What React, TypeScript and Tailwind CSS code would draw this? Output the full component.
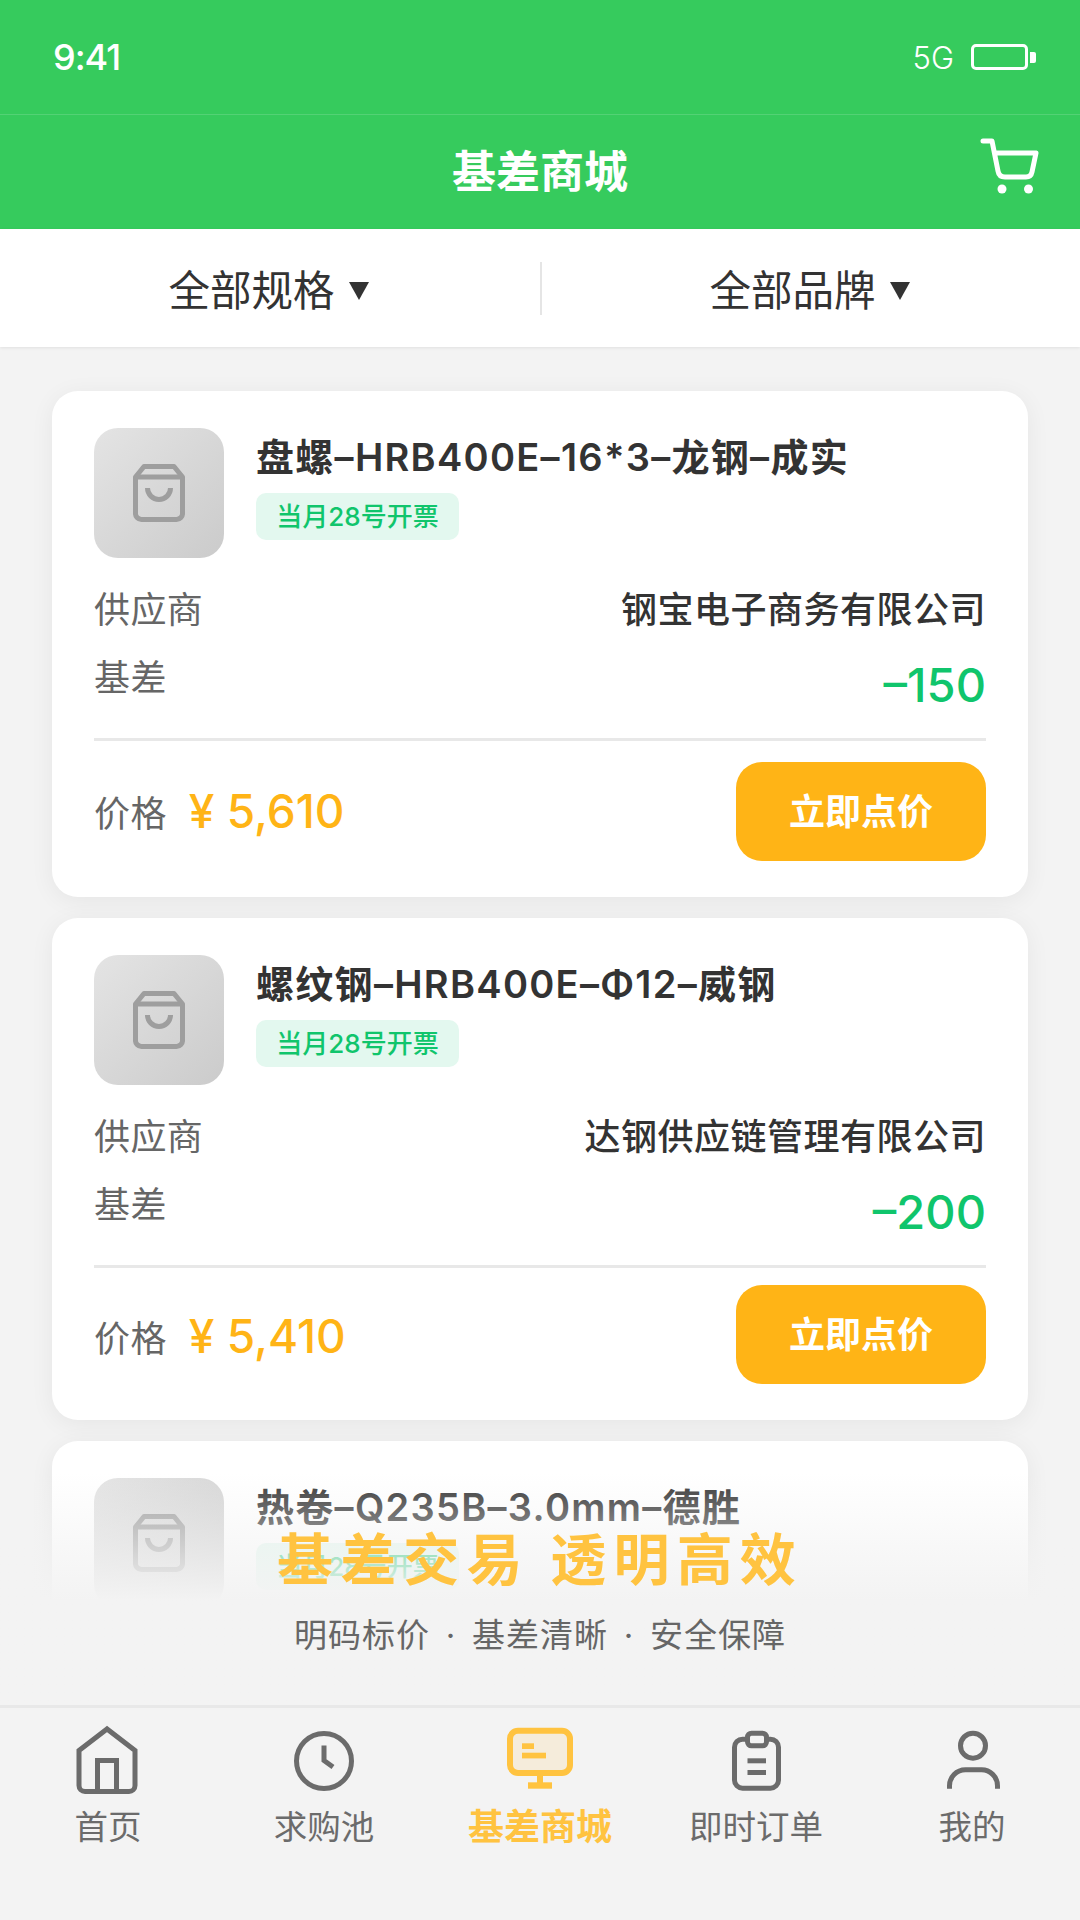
import React from 'react';

type Product = {
  title: string;
  supplier?: string;
  basis?: string;
  price?: string;
  footTop?: string;
  priceTop?: string;
};

const PRODUCTS: Product[] = [
  { title: '盘螺–HRB400E–16*3–龙钢–成实', supplier: '钢宝电子商务有限公司', basis: '–150', price: '5,610', footTop: 'mt-[21px]', priceTop: 'mt-0' },
  { title: '螺纹钢–HRB400E–Φ12–威钢', supplier: '达钢供应链管理有限公司', basis: '–200', price: '5,410', footTop: 'mt-[17px]', priceTop: 'mt-[4px]' },
  { title: '热卷–Q235B–3.0mm–德胜' },
];

const BagIcon = () => (
  <svg width="52" height="58" viewBox="0 0 52 58" fill="none" stroke="#9e9e9e" strokeWidth="5">
    <path d="M2.5 13 L11 2.5 H41 L49.5 13 V49 a6 6 0 0 1 -6 6.5 H8.5 a6 6 0 0 1 -6 -6.5 Z" strokeLinejoin="round" />
    <path d="M2.5 13 H49.5" />
    <path d="M14.5 24 a11.5 11.5 0 0 0 23 0" />
  </svg>
);

const ProductCard: React.FC<{ item: Product }> = ({ item }) => (
  <div className="bg-white rounded-[26px] px-[42px] pt-[37px] pb-9 shadow-[0_4px_24px_rgba(0,0,0,0.06)]">
    <div className="flex gap-[32px]">
      <div className="w-[130px] h-[130px] rounded-[24px] bg-gradient-to-br from-[#e4e4e4] to-[#cbcbcb] flex items-center justify-center shrink-0">
        <BagIcon />
      </div>
      <div>
        <h2 className="text-[38px] leading-[50px] font-semibold tracking-[1.3px] text-[#333333] whitespace-nowrap mt-[4px]">{item.title}</h2>
        <span className="mt-[11px] inline-flex items-center justify-center w-[203px] h-[47px] rounded-[10px] bg-[#e3f8ef] text-[#10c56c] text-[26px] font-medium">
          当月28号开票
        </span>
      </div>
    </div>
    {item.supplier && (
      <>
        <div className="mt-[30px] flex justify-between items-center h-[44px]">
          <span className="text-[36px] tracking-[0.4px] text-[#666666]">供应商</span>
          <span className="text-[36px] tracking-[0.5px] font-medium text-[#333333]">{item.supplier}</span>
        </div>
        <div className="mt-[24px] flex justify-between items-start h-[85px] border-b-[3px] border-[#e8e8e8]">
          <span className="text-[36px] leading-[44px] tracking-[0.4px] text-[#666666]">基差</span>
          <span className="text-[47px] leading-[58px] font-medium text-[#10c56c]">{item.basis}</span>
        </div>
        <div className={`${item.footTop} flex justify-between items-center`}>
          <div className={`${item.priceTop} flex items-center gap-[22px]`}>
            <span className="text-[36px] tracking-[0.4px] text-[#666666] mt-[4px]">价格</span>
            <span className="text-[46px] font-medium text-[#ffb416]">¥ {item.price}</span>
          </div>
          <button className="w-[250px] h-[99px] rounded-[26px] bg-[#ffb416] text-white text-[36px] font-semibold">
            立即点价
          </button>
        </div>
      </>
    )}
  </div>
);

const TABS: { label: string; active?: boolean; icon: React.ReactNode }[] = [
  {
    label: '首页',
    icon: (
      <g fill="none" stroke="#6b6b6b" strokeWidth="5">
        <path d="M35 4 L7 25.5 V60.5 a6 6 0 0 0 6 6 H57 a6 6 0 0 0 6 -6 V25.5 Z" />
        <path d="M25.5 66.5 V35.5 H44.5 V66.5" />
      </g>
    ),
  },
  {
    label: '求购池',
    icon: (
      <g fill="none" stroke="#6b6b6b" strokeWidth="5">
        <circle cx="36" cy="36" r="27.5" />
        <path d="M36 20.5 V35.5 L45 42" />
      </g>
    ),
  },
  {
    label: '基差商城',
    active: true,
    icon: (
      <g>
        <rect x="6" y="5.7" width="60" height="42.3" rx="8" fill="#f5ecdb" stroke="#ffc340" strokeWidth="6" />
        <rect x="18" y="18.3" width="12" height="5.7" fill="#ffc340" />
        <rect x="18" y="27.7" width="24" height="5.7" fill="#ffc340" />
        <rect x="33" y="50" width="6" height="8" fill="#ffc340" />
        <rect x="24" y="57.3" width="24" height="6.4" fill="#ffc340" />
      </g>
    ),
  },
  {
    label: '即时订单',
    icon: (
      <g fill="none" stroke="#6b6b6b" strokeWidth="5">
        <rect x="14.5" y="14.2" width="44" height="49" rx="8" />
        <rect x="27.5" y="8.2" width="19" height="12.6" rx="4" fill="#f3f3f3" />
        <rect x="27.5" y="33.3" width="18.5" height="5" fill="#6b6b6b" stroke="none" />
        <rect x="27.5" y="45" width="18.5" height="5" fill="#6b6b6b" stroke="none" />
      </g>
    ),
  },
  {
    label: '我的',
    icon: (
      <g fill="none" stroke="#6b6b6b" strokeWidth="5">
        <circle cx="37" cy="20.7" r="12.5" />
        <path d="M13.5 63.7 V61 a16 16 0 0 1 16 -16.2 H45 a16 16 0 0 1 16.5 16.2 V63.7" />
      </g>
    ),
  },
];

const App: React.FC = () => {
  return (
    <div className="w-[1080px] h-[1920px] overflow-hidden flex flex-col bg-[#f3f3f3] font-['Inter','Noto_Sans_CJK_SC',sans-serif]">
      {/* status bar */}
      <div className="h-[115px] shrink-0 bg-[#36cb5d] border-b border-white/15 flex items-center justify-between pl-[53px] pr-[44px] text-white">
        <span className="text-[36px] font-medium tracking-[-1px]">9:41</span>
        <div className="flex items-center">
          <span className="text-[31px] font-light mr-[17px] mt-[3px]">5G</span>
          <div className="w-[57px] h-[26px] rounded-[5px] border-[3px] border-white" />
          <div className="w-[6px] h-[11px] ml-[2px] rounded-r-[2px] bg-white" />
        </div>
      </div>

      {/* header */}
      <div className="h-[114px] shrink-0 bg-[#36cb5d] grid grid-cols-[1fr_auto_1fr] items-center text-white">
        <span />
        <h1 className="text-[44px] font-semibold">基差商城</h1>
        <svg className="justify-self-end mr-10 -mt-[22px]" width="80" height="70" viewBox="0 0 80 70" fill="none" stroke="#ffffff" strokeWidth="5" strokeLinecap="round" strokeLinejoin="round">
          <path d="M23 15 H32 L38 45 Q39 51 45 51 H66 Q71 51 72 46 L76 27 H35" />
          <circle cx="42" cy="63" r="4.5" fill="#ffffff" stroke="none" />
          <circle cx="68.5" cy="63" r="4.5" fill="#ffffff" stroke="none" />
        </svg>
      </div>

      {/* filters */}
      <div className="relative z-10 h-[118px] shrink-0 bg-white grid grid-cols-2 items-center shadow-[0_1px_3px_rgba(0,0,0,0.08)]">
        {['全部规格', '全部品牌'].map((name, index) => (
          <div key={name} className={`h-[53px] pr-[3px] flex items-center justify-center gap-[14px] ${index === 1 ? 'border-l-2 border-[#e5e5e5]' : ''}`}>
            <span className="text-[41.5px] text-[#333333] mt-[6px]">{name}</span>
            <svg className="mt-[6px]" width="20" height="18" viewBox="0 0 20 18"><path d="M0 0 H20 L10 18 Z" fill="#333333" /></svg>
          </div>
        ))}
      </div>

      {/* list */}
      <div className="relative flex-1 min-h-0 overflow-hidden">
        <div className="px-[52px] pt-[44px] flex flex-col gap-[21px]">
          {PRODUCTS.map(item => <ProductCard key={item.title} item={item} />)}
        </div>
        <div className="absolute left-0 right-0 bottom-0 h-[232px] bg-gradient-to-b from-transparent to-[#f3f3f3] to-[55%] flex flex-col items-center">
          <p className="mt-[52px] text-[56px] leading-[70px] font-bold tracking-[7.2px] text-[#ffc340] whitespace-pre">基差交易 透明高效</p>
          <p className="mt-[18px] text-[33px] leading-[44px] tracking-[1px] text-[#666666] whitespace-pre">
            明码标价 <span className="mx-[5.5px]">·</span> 基差清晰 <span className="mx-[5.5px]">·</span> 安全保障
          </p>
        </div>
      </div>

      {/* tab bar */}
      <div className="h-[215px] shrink-0 border-t-[3px] border-[#e8e8e8] grid grid-cols-5 pt-[17px]">
        {TABS.map(tab => (
          <div key={tab.label} className="flex flex-col items-center">
            <svg width="72" height="72" viewBox="0 0 72 72">{tab.icon}</svg>
            <span className={`mt-[8px] leading-[44px] ${tab.active ? 'text-[36px] font-semibold text-[#ffc340]' : 'text-[33.5px] text-[#6b6b6b]'}`}>
              {tab.label}
            </span>
          </div>
        ))}
      </div>
    </div>
  );
};

export default App;
